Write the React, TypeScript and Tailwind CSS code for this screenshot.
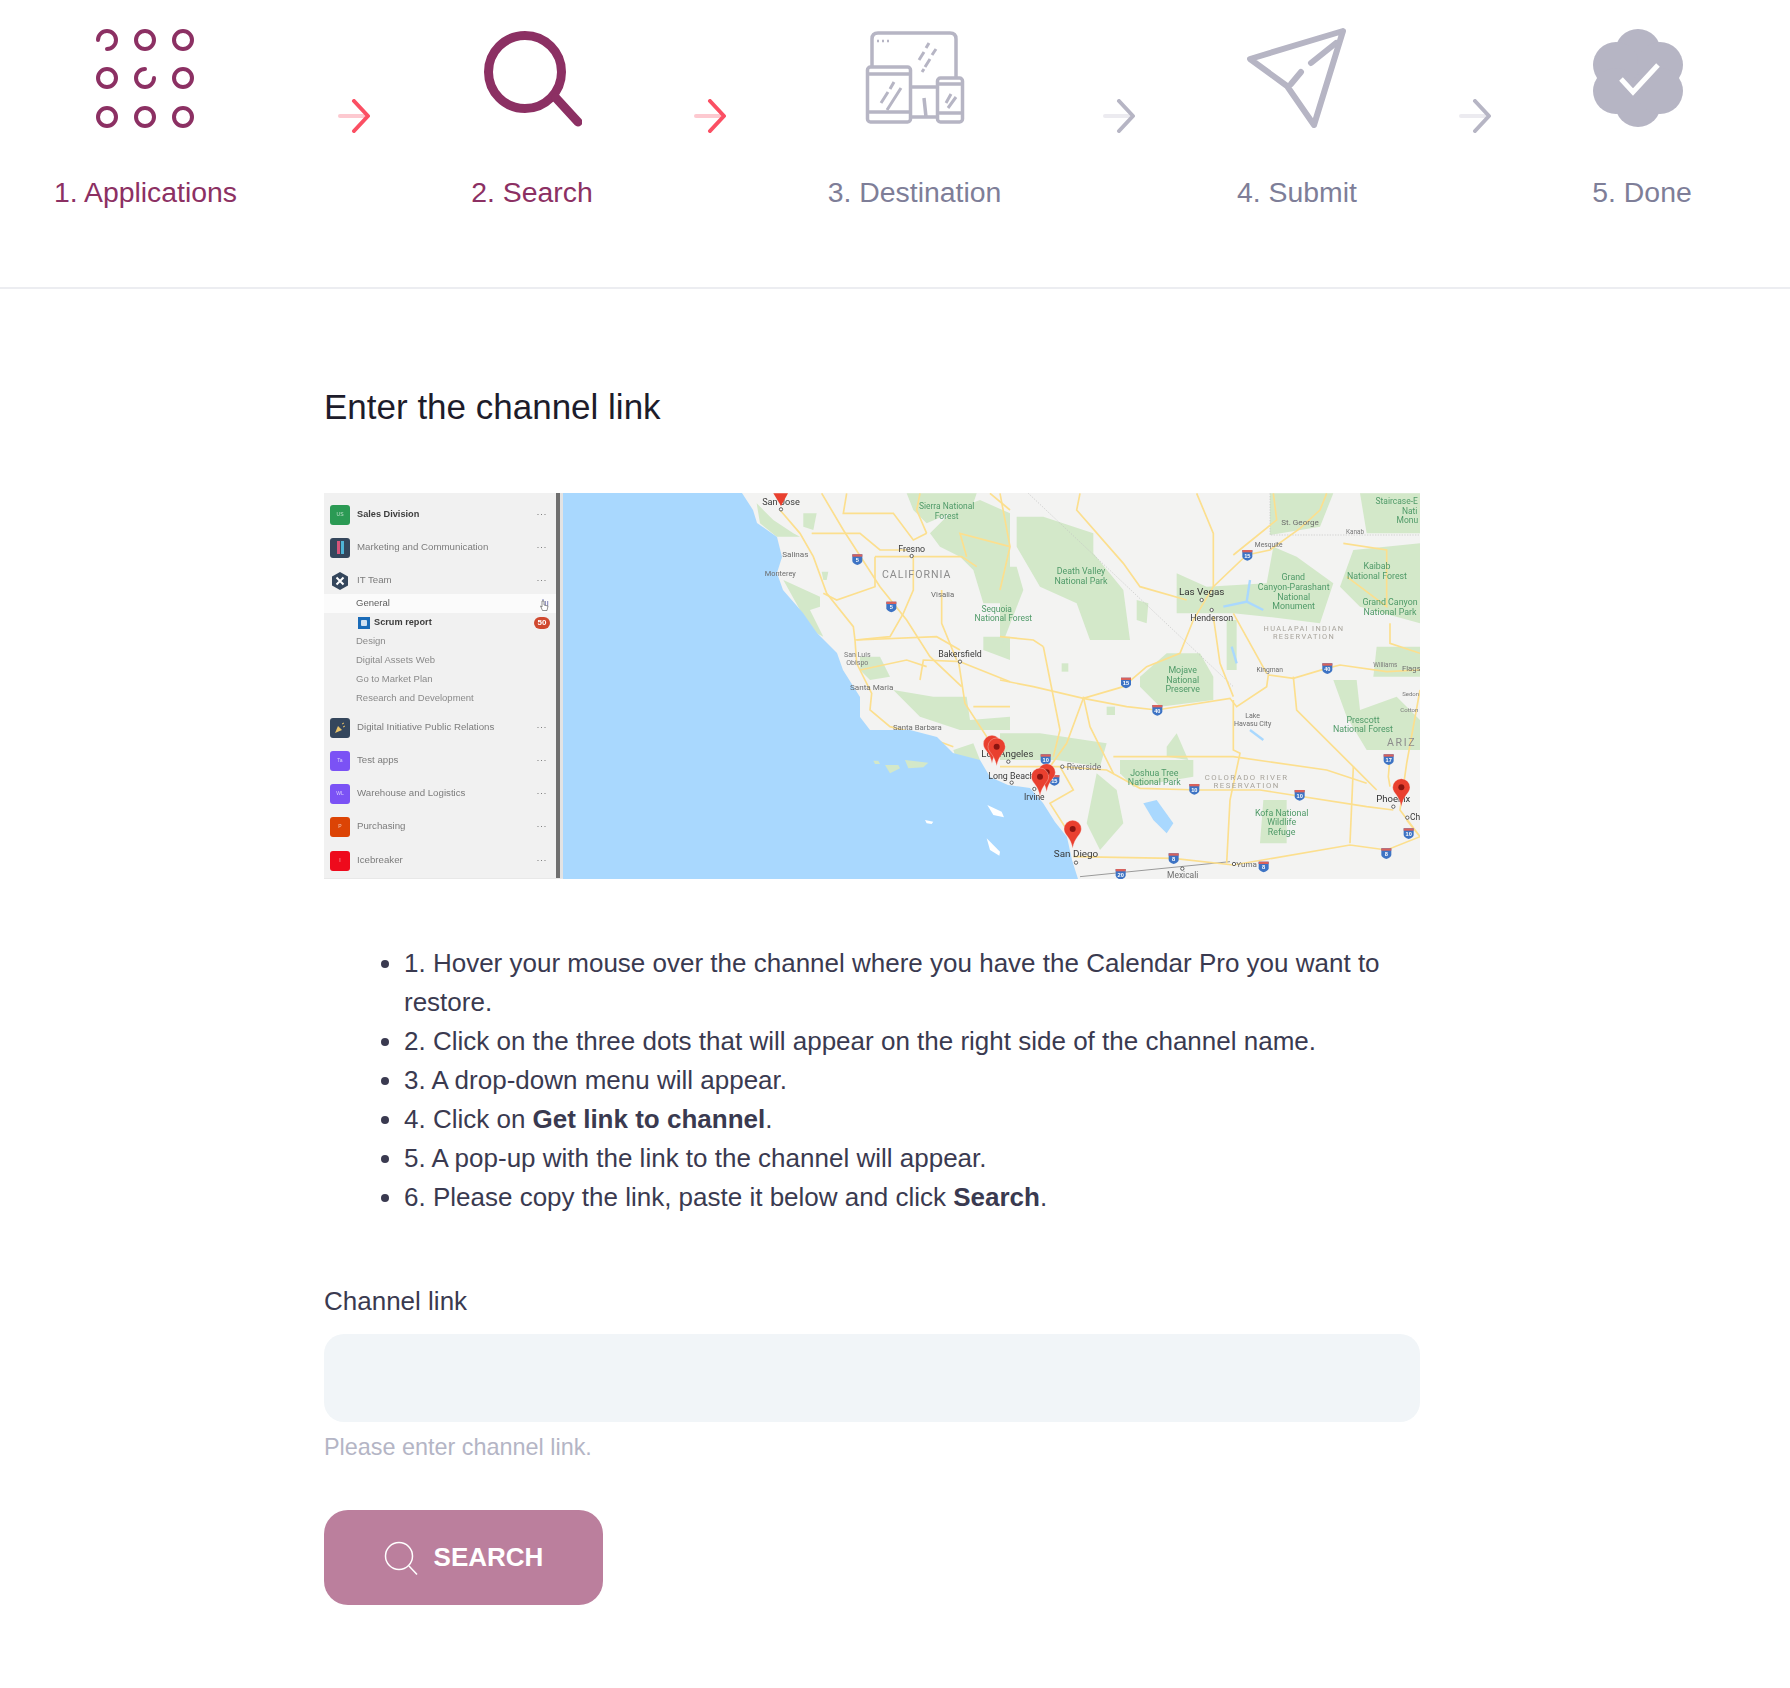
import React from "react";

const FONT = "font-['Liberation_Sans',Arial,sans-serif]";

function Apps() {
  const xs = [107, 145, 183];
  const ys = [40, 78, 117];
  return (
    <svg width="100" height="100" viewBox="96 28 100 100" fill="none" stroke="#8c3063" strokeWidth="4" strokeLinecap="round">
      {ys.map((y, r) =>
        xs.map((x, c) => {
          if (r === 0 && c === 0) return <path key="a" d="M98 40 A9 9 0 1 1 107 49" />;
          if (r === 1 && c === 1) return <path key="b" d="M145 69 A9 9 0 1 0 154 78" />;
          return <circle key={`${r}${c}`} cx={x} cy={y} r="9" />;
        })
      )}
    </svg>
  );
}

function SearchBig() {
  return (
    <svg width="100" height="100" viewBox="482 28 100 100" fill="none" stroke="#8c3063" strokeWidth="9" strokeLinecap="round">
      <circle cx="525" cy="72" r="36.5" />
      <path d="M556 98 L578 122" />
    </svg>
  );
}

function Devices() {
  return (
    <svg width="100" height="100" viewBox="866 28 100 100" fill="none" stroke="#b6b5c4" strokeWidth="3.5">
      <path d="M873 66 V39 Q873 33 879 33 H951 Q957 33 957 39 V77" />
      <path d="M878 41 h2 M883 41 h2 M888 41 h2" strokeWidth="2.5" />
      <path d="M930 43 l-3 5 M925 52 l-5 8 M937 49 l-4 6 M931 59 l-5 8 M925 69 l-2 3" strokeWidth="3" />
      <rect x="868.5" y="67" width="43" height="55" rx="3" />
      <path d="M868 74 H912 M868 112 H912" />
      <path d="M895 82 l-4 7 M889 92 l-7 11 M902 88 l-14 22" strokeWidth="3" />
      <rect x="938.5" y="78" width="25" height="44" rx="3" />
      <path d="M938 84 H964 M938 113 H964" />
      <path d="M952 94 l-5 9 M957 97 l-8 11" strokeWidth="3" />
      <path d="M912 87 H938 M925 98 L927 117 M912 117 H938" />
    </svg>
  );
}

function Plane() {
  return (
    <svg width="100" height="100" viewBox="1248 28 100 100" fill="none" stroke="#b6b5c4" strokeWidth="6" strokeLinecap="round" strokeLinejoin="round">
      <path d="M1344 31 L1251 59 L1288 86 L1315 125 Z" />
      <path d="M1337 43 L1312 63 M1302 72 L1292 84" />
    </svg>
  );
}

function Done() {
  return (
    <svg width="100" height="100" viewBox="1591 28 100 100">
      <g fill="#b6b5c4">
        <circle cx="1637" cy="78" r="36" />
        <circle cx="1637" cy="52" r="23" />
        <circle cx="1637" cy="104" r="23" />
        <circle cx="1615" cy="65" r="23" />
        <circle cx="1659" cy="65" r="23" />
        <circle cx="1615" cy="91" r="23" />
        <circle cx="1659" cy="91" r="23" />
      </g>
      <path d="M1620 79 L1632 92 L1657 65" fill="none" stroke="#fff" strokeWidth="5" />
    </svg>
  );
}

function Arrow({ on }: { on: boolean }) {
  return (
    <svg width="32" height="34" viewBox="0 0 32 34" fill="none" strokeWidth="4" strokeLinecap="round" strokeLinejoin="round" className="shrink-0 mt-[99px]">
      <path d="M2 17 H26" stroke={on ? "#fdc9d0" : "#ecebf0"} />
      <path d="M16 2 L30 17 L16 32" stroke={on ? "#fb4f63" : "#b6b5c4"} />
    </svg>
  );
}

function Step({ icon, label, on, w }: { icon: React.ReactNode; label: string; on: boolean; w: string }) {
  return (
    <div className={`flex flex-col items-center shrink-0 ${w}`}>
      <div className="h-[100px] mt-[28px] flex items-center justify-center">{icon}</div>
      <div className={`mt-[46px] text-[28.4px] leading-[36px] whitespace-nowrap ${on ? "text-[#8c3063]" : "text-[#7e7e98]"}`}>{label}</div>
    </div>
  );
}

const greens4 = [
  "590,40 640,90 700,130 720,140 650,140 600,100",
  "1110,130 1180,60 1260,30 1350,70 1350,340 1270,340 1240,240 1200,200 1140,170",
  "670,270 780,320 780,350 750,360 790,440 770,430 720,360",
  "900,500 960,500 990,560 930,570 900,540",
  "1000,600 1120,620 1220,620 1230,690 1350,680 1350,720 1200,720 1080,680",
  "730,70 770,70 760,120 730,110",
  "1270,440 1350,440 1350,510 1270,480",
  "1040,10 1250,10 1240,40 1100,100 1060,60",
  "785,245 805,245 800,270 790,270",
  "1180,780 1240,760 1260,810 1190,810",
];
const greens5 = [
  "50,80 130,80 280,130 280,190 370,300 390,450 270,450 230,340 120,290 50,170",
  "0,230 50,230 70,300 0,480",
  "810,10 1000,10 960,110 810,135",
  "1080,10 1260,10 1260,130 1100,130",
  "530,250 620,290 800,280 820,170 890,200 1000,280 960,400 800,380 700,370 530,370",
  "1060,180 1260,160 1260,400 1080,350 1020,290",
  "420,560 500,490 600,490 640,560 640,630 480,650 420,590",
  "410,330 445,340 440,400 410,390",
  "0,730 120,730 320,760 300,830 170,810 0,810",
  "500,770 530,730 565,810 500,800",
  "1000,570 1070,570 1080,660 1190,620 1260,690 1260,780 1180,780 1100,780 1040,680",
  "360,810 580,810 580,860 400,890 360,850",
  "290,850 350,900 370,1000 300,1080 260,1000",
  "790,930 860,930 860,1060 780,1060",
  "1130,470 1260,470 1260,560 1120,560",
  "680,390 710,390 710,540 680,540",
  "320,650 345,650 345,675 320,675",
  "185,520 205,520 205,545 185,545",
];
const roads4 = [
  "785,10 850,120 960,290 1040,390 1110,500 1205,590",
  "660,60 720,130 760,200 800,310 880,410 885,450 890,520 935,610 930,660 990,710 1070,730 1180,770",
  "885,450 990,440 1030,370 1060,300 1060,200",
  "945,200 1205,200 1250,230",
  "945,200 945,290 830,330 790,310",
  "1205,515 1090,510 1080,570",
  "1195,510 1215,640 1280,740 1290,770",
  "1200,515 1350,575",
  "890,450 1130,440 1200,480",
  "1145,300 1145,400 1190,510",
  "1240,650 1350,650",
  "860,10 850,70 1000,70 1060,150 1100,130",
  "755,130 900,130 960,180 1040,180",
  "900,540 1040,510 1100,530",
  "1100,130 1070,60 1080,10",
  "1290,10 1350,60",
  "1220,200 1200,130 1350,170",
];
const roads5 = [
  "0,570 100,590 250,625 370,590 440,530 540,490 580,390 640,290 740,195 810,180 900,115 960,60 980,10",
  "250,625 380,650 470,660 690,625 710,650 800,590 805,555 880,565 980,535 1020,525 1160,545 1260,540",
  "0,830 180,830 320,840 420,895 600,900 780,900 1100,950 1180,960",
  "1170,800 1165,860 1170,890",
  "220,1100 520,1105 700,1125 1050,1065 1160,1080 1260,1040",
  "250,625 200,760 150,830",
  "130,470 180,720 160,800",
  "880,560 890,660 1060,830 1130,900",
  "700,630 700,780 720,790 690,930 680,1120",
  "0,440 100,450 130,470",
  "240,10 230,60 370,220 420,290 560,330",
  "640,380 660,520 700,620",
  "700,370 800,550",
  "590,10 640,130 640,290",
  "1170,400 1170,460 1260,490",
  "1220,990 1260,1040 1200,960 1220,820 1260,600",
  "180,830 220,900 150,940 220,1050",
  "250,620 270,710 340,850",
  "340,800 700,800 980,840 1100,880",
  "0,1000 90,1000",
  "820,10 830,90 700,195",
  "1060,830 1050,1060",
  "0,10 30,170 0,300",
  "1030,160 1160,180 1160,350 1040,260",
];

function Shield({ x, y, n }: { x: number; y: number; n: string }) {
  return (
    <g>
      <path d={`M${x - 15} ${y - 15} H${x + 15} V${y + 5} Q${x + 14} ${y + 13} ${x} ${y + 17} Q${x - 14} ${y + 13} ${x - 15} ${y + 5} Z`} fill="#3d73c4" />
      <rect x={x - 15} y={y - 15} width="30" height="7" fill="#d9615b" />
      <text x={x} y={y + 8} fontSize="17" fill="#fff" textAnchor="middle" fontWeight="700">{n}</text>
    </g>
  );
}

function Pin({ x, y }: { x: number; y: number }) {
  return (
    <g>
      <path d={`M${x} ${y} C${x - 6} ${y - 35} ${x - 26} ${y - 40} ${x - 26} ${y - 58} A26 26 0 1 1 ${x + 26} ${y - 58} C${x + 26} ${y - 40} ${x + 6} ${y - 35} ${x} ${y} Z`} fill="#e9402f" stroke="#fbeeea" strokeWidth="1" />
      <circle cx={x} cy={y - 58} r="9" fill="#8a1410" />
    </g>
  );
}

type L = [string, number, number, string?, number?, number?];
const GREEN = "#4f9a68";
const GR = "#6d6d6d";
const DK = "#3a3a3a";
const labels4: L[] = [
  ["San Jose", 663, 44, DK, 26],
  ["Sierra National", 1160, 58, GREEN, 24],
  ["Forest", 1160, 87, GREEN, 24],
  ["Fresno", 1055, 187, DK, 25],
  ["Salinas", 706, 202, GR, 23],
  ["Monterey", 661, 257, GR, 21],
  ["CALIFORNIA", 1070, 265, "#8c8c8c", 30, 3],
  ["Visalia", 1148, 322, GR, 22],
  ["Sequoia", 1310, 365, GREEN, 24],
  ["National Forest", 1330, 393, GREEN, 24],
  ["Bakersfield", 1200, 501, DK, 25],
  ["San Luis", 892, 502, "#7a7a7a", 20],
  ["Obispo", 892, 526, "#7a7a7a", 20],
  ["Santa Maria", 935, 599, GR, 23],
  ["Santa Barbara", 1072, 720, GR, 22],
];
const labels5: L[] = [
  ["Staircase-E", 1190, 42, GREEN, 24],
  ["Nati", 1229, 71, GREEN, 24],
  ["Monu", 1222, 100, GREEN, 24],
  ["St. George", 900, 104, GR, 23],
  ["Kanab", 1065, 132, "#7a7a7a", 18],
  ["Mesquite", 806, 172, GR, 19],
  ["Kaibab", 1131, 236, GREEN, 25],
  ["National Forest", 1131, 266, GREEN, 25],
  ["Death Valley", 243, 253, GREEN, 25],
  ["National Park", 243, 281, GREEN, 25],
  ["Grand", 880, 271, GREEN, 25],
  ["Canyon-Parashant", 881, 300, GREEN, 25],
  ["National", 881, 329, GREEN, 25],
  ["Monument", 881, 357, GREEN, 25],
  ["Las Vegas", 605, 316, "#333", 28],
  ["Grand Canyon", 1170, 345, GREEN, 25],
  ["National Park", 1170, 374, GREEN, 25],
  ["Henderson", 635, 392, DK, 25],
  ["HUALAPAI INDIAN", 912, 423, "#a8a49c", 21, 4],
  ["RESERVATION", 912, 447, "#a8a49c", 21, 4],
  ["Mojave", 548, 550, GREEN, 25],
  ["National", 548, 579, GREEN, 25],
  ["Preserve", 548, 607, GREEN, 25],
  ["Kingman", 809, 546, GR, 19],
  ["Williams", 1156, 532, "#7a7a7a", 18],
  ["Flags", 1234, 543, GR, 22],
  ["Sedon", 1232, 619, "#7a7a7a", 17],
  ["Cotton", 1228, 665, "#7a7a7a", 17],
  ["Lake", 758, 684, GR, 20],
  ["Havasu City", 758, 707, GR, 20],
  ["Prescott", 1089, 698, GREEN, 25],
  ["National Forest", 1089, 726, GREEN, 25],
  ["ARIZ", 1205, 769, "#8c8c8c", 30, 5],
  ["Los Angeles", 22, 800, DK, 27],
  ["Riverside", 252, 840, GR, 24],
  ["Joshua Tree", 463, 857, GREEN, 25],
  ["National Park", 463, 885, GREEN, 25],
  ["COLORADO RIVER", 740, 870, "#a8a49c", 22, 4.5],
  ["RESERVATION", 740, 894, "#a8a49c", 22, 4.5],
  ["Long Beach", 34, 866, DK, 25],
  ["Irvine", 103, 929, DK, 24],
  ["Phoenix", 1180, 936, "#333", 27],
  ["Ch", 1245, 991, DK, 24],
  ["Kofa National", 845, 977, GREEN, 25],
  ["Wildlife", 845, 1006, GREEN, 25],
  ["Refuge", 845, 1035, GREEN, 25],
  ["San Diego", 228, 1102, DK, 28],
  ["Yuma", 740, 1130, GR, 23],
  ["Mexicali", 548, 1163, GR, 24],
];

function Labels({ items }: { items: L[] }) {
  return (
    <>
      {items.map(([t, x, y, c, s, ls]) => (
        <text key={t + x} x={x} y={y} fill={c} fontSize={(s || 24) * 1.06} textAnchor="middle" letterSpacing={ls || 0} fontFamily="Roboto, Liberation Sans, Arial, sans-serif">{t}</text>
      ))}
    </>
  );
}

function MapPic() {
  return (
    <svg width="857" height="386" viewBox="563 493 857 386" className="block blur-[0.5px]" preserveAspectRatio="none">
      <rect x="563" y="493" width="857" height="386" fill="#f3f3f2" />
      <g transform="translate(560 490) scale(0.33333)">
        {greens4.map((p) => <polygon key={p} points={p} fill="#d3e8c9" />)}
        {roads4.map((p) => <polyline key={p} points={p} fill="none" stroke="#fcdf8e" strokeWidth="5" />)}
      </g>
      <g transform="translate(1000 490) scale(0.33333)">
        {greens5.map((p) => <polygon key={p} points={p} fill="#d3e8c9" />)}
        <polygon points="430,940 470,930 520,1000 500,1030 460,990" fill="#a9d8fe" />
        <path d="M670 350 L740 335 L750 270 M740 335 L790 360 M695 470 L710 520 M750 720 L790 750" fill="none" stroke="#a9d8fe" strokeWidth="7" />
        <path d="M85 10 L700 590 M810 10 V135 H1260" fill="none" stroke="#c2c2c2" strokeWidth="2" strokeDasharray="4 4" />
        <path d="M240 1160 L690 1115" fill="none" stroke="#9a9a9a" strokeWidth="3" />
        {roads5.map((p) => <polyline key={p} points={p} fill="none" stroke="#fcdf8e" strokeWidth="5" />)}
      </g>
      <polygon
        points="563,493 742,493 753,510 757,523 777,537 782,557 777,573 783,590 803,613 817,633 837,653 843,670 860,697 860,717 870,730 910,730 937,737 953,753 980,760 990,777 1008,785 1030,788 1043,803 1055,822 1067,837 1072,860 1078,879 563,879"
        fill="#a9d8fe"
      />
      <g transform="translate(560 490) scale(0.33333)">
        <polygon points="940,812 955,812 960,822 945,822" fill="#d3e8c9" />
        <polygon points="975,825 1015,825 1020,835 990,850" fill="#d3e8c9" />
        <polygon points="1035,810 1105,818 1090,832 1045,835" fill="#d3e8c9" />
        <polygon points="1282,945 1325,965 1332,982 1300,975" fill="#fff" />
        <polygon points="1095,990 1120,995 1115,1002 1100,1000" fill="#fff" />
        <polygon points="1280,1045 1320,1085 1318,1097 1290,1080" fill="#fff" />
        <Shield x={892} y={208} n="5" />
        <Shield x={994} y={350} n="5" />
        <Labels items={labels4} />
        <circle cx="663" cy="58" r="5" fill="#fff" stroke="#444" strokeWidth="2.5" />
        <circle cx="1055" cy="198" r="5" fill="#fff" stroke="#444" strokeWidth="2.5" />
        <circle cx="1200" cy="515" r="5" fill="#fff" stroke="#444" strokeWidth="2.5" />
        <path d="M640 10 H684 L663 48 Z" fill="#e9402f" />
      </g>
      <g transform="translate(1000 490) scale(0.33333)">
        {[[742, 195, "15"], [378, 578, "15"], [472, 660, "40"], [982, 535, "40"], [137, 808, "10"], [163, 870, "15"], [583, 897, "10"], [899, 915, "10"], [1166, 808, "17"], [1226, 1030, "10"], [1159, 1090, "8"], [521, 1105, "8"], [791, 1130, "8"], [362, 1152, "20"]].map(([x, y, n]) => (
          <Shield key={`${x}${y}`} x={x as number} y={y as number} n={n as string} />
        ))}
        <Labels items={labels5} />
        {[[605, 330], [635, 360], [25, 815], [187, 830], [35, 878], [103, 897], [228, 1118], [1180, 950], [1222, 983], [547, 1136], [702, 1122]].map(([x, y]) => (
          <circle key={`${x}${y}`} cx={x} cy={y} r="5" fill="#fff" stroke="#444" strokeWidth="2.5" />
        ))}
        <Pin x={140} y={905} />
        <Pin x={120} y={918} />
        <Pin x={218} y={1075} />
        <Pin x={1204} y={950} />
      </g>
      <g transform="translate(560 490) scale(0.33333)">
        <Pin x={1296} y={820} />
        <Pin x={1310} y={828} />
      </g>
    </svg>
  );
}

function TeamIcon({ bg, t }: { bg: string; t?: string }) {
  return (
    <div className={`w-[20px] h-[20px] rounded-[3px] flex items-center justify-center text-[5px] text-white/70 ${bg}`}>{t}</div>
  );
}

function Team({ icon, name, bold }: { icon: React.ReactNode; name: string; bold?: boolean }) {
  return (
    <div className="h-[33px] flex items-center pl-[6px] pr-[9px]">
      {icon}
      <div className={`ml-[7px] flex-1 whitespace-nowrap ${bold ? "text-[9.2px] font-bold text-[#3d3d3d]" : "text-[9.7px] text-[#7c7c7c]"}`}>{name}</div>
      <div className="text-[#6f6f6f] text-[9px] leading-none tracking-[0.5px]">···</div>
    </div>
  );
}

function Channel({ name, children, on }: { name: string; children?: React.ReactNode; on?: boolean }) {
  return (
    <div className={`h-[19px] flex items-center pl-[32px] pr-[7px] text-[9.5px] ${on ? "bg-[#fbfbfb] text-[#5e5e5e]" : "text-[#8a8a8a]"}`}>
      <div className="flex-1 whitespace-nowrap">{name}</div>
      {children}
    </div>
  );
}

function Sidebar() {
  return (
    <div className="w-[232px] shrink-0 h-full bg-[#f1f1f1] pt-[5px] blur-[0.4px] overflow-hidden">
      <Team name="Sales Division" bold icon={<TeamIcon bg="bg-[#2b9a54]" t="US" />} />
      <Team
        name="Marketing and Communication"
        icon={
          <div className="w-[20px] h-[20px] rounded-[3px] bg-[#34465c] flex items-center justify-center gap-[1px]">
            <div className="w-[3px] h-[13px] bg-[#d6547a]" />
            <div className="w-[3px] h-[13px] bg-[#4fb3d6]" />
          </div>
        }
      />
      <Team
        name="IT Team"
        icon={
          <svg width="20" height="20" viewBox="0 0 20 20">
            <polygon points="10,1 18,5.5 18,14.5 10,19 2,14.5 2,5.5" fill="#34465c" />
            <path d="M6.5 6.5 L13.5 13.5 M13.5 6.5 L6.5 13.5" stroke="#fff" strokeWidth="2" />
          </svg>
        }
      />
      <div className="-mt-[3px]">
        <Channel name="General" on>
          <div className="relative text-[#6264a7] text-[9px] leading-none">
            lıı
            <svg width="10" height="12" viewBox="0 0 10 12" className="absolute left-[-3px] top-[1px]">
              <path d="M3 1 V7 L1.5 6 L3.5 10.5 H8 L9 6 L5 5 V1 Z" fill="#fff" stroke="#666" strokeWidth="0.7" />
            </svg>
          </div>
        </Channel>
        <div className="h-[19px] flex items-center pl-[34px] pr-[6px] text-[9.2px] font-bold text-[#3d3d3d]">
          <div className="w-[12px] h-[12px] bg-[#1a6bb8] mr-[4px] flex items-center justify-center">
            <div className="w-[6px] h-[6px] bg-white/80 rounded-[1px]" />
          </div>
          <div className="flex-1 whitespace-nowrap">Scrum report</div>
          <div className="w-[16px] h-[12px] rounded-full bg-[#d0492f] text-white text-[8px] leading-[12px] text-center">50</div>
        </div>
        <Channel name="Design" />
        <Channel name="Digital Assets Web" />
        <Channel name="Go to Market Plan" />
        <Channel name="Research and Development" />
      </div>
      <div className="mt-[3px]">
        <Team
          name="Digital Initiative Public Relations"
          icon={
            <div className="w-[20px] h-[20px] rounded-[3px] bg-[#34465c] flex items-center justify-center">
              <svg width="12" height="12" viewBox="0 0 12 12"><path d="M1 11 L4 4 L8 8 Z" fill="#e8c36a" /><path d="M8 2 L10 1 M9 5 L11 4" stroke="#e8c36a" /></svg>
            </div>
          }
        />
        <Team name="Test apps" icon={<TeamIcon bg="bg-[#7b52f5]" t="Ta" />} />
        <Team name="Warehouse and Logistics" icon={<TeamIcon bg="bg-[#7b52f5]" t="WL" />} />
        <Team name="Purchasing" icon={<TeamIcon bg="bg-[#dc4405]" t="P" />} />
        <div className="mt-[1px]">
          <Team name="Icebreaker" icon={<TeamIcon bg="bg-[#ee0a1c]" t="I" />} />
        </div>
      </div>
    </div>
  );
}

export default function App() {
  return (
    <div className={`${FONT} bg-white h-[1688px] w-[1790px] overflow-hidden`}>
      <div className="h-[289px] border-b-2 border-[#ecedf1] flex items-start pl-[54px] gap-[101px]">
        <Step icon={<Apps />} label="1. Applications" on w="w-[183px]" />
        <Arrow on />
        <Step icon={<SearchBig />} label="2. Search" on w="w-[122px]" />
        <Arrow on />
        <Step icon={<Devices />} label="3. Destination" on={false} w="w-[175px]" />
        <Arrow on={false} />
        <Step icon={<Plane />} label="4. Submit" on={false} w="w-[122px]" />
        <Arrow on={false} />
        <Step icon={<Done />} label="5. Done" on={false} w="w-[100px]" />
      </div>

      <div className="ml-[324px] w-[1096px]">
        <h1 className="mt-[93px] text-[35px] leading-[50px] text-[#1d1c2b]">Enter the channel link</h1>

        <div className="mt-[61px] h-[386px] flex bg-white border-b border-[#e8e8e8]">
          <Sidebar />
          <div className="w-[4px] h-full bg-[#6f6f6f] shrink-0" />
          <div className="w-[3px] h-full bg-[#e3e3e3] shrink-0" />
          <MapPic />
        </div>

        <ul className="mt-[65px] list-disc pl-[80px] text-[26px] leading-[39px] text-[#3a3a50]">
          <li>1. Hover your mouse over the channel where you have the Calendar Pro you want to restore.</li>
          <li>2. Click on the three dots that will appear on the right side of the channel name.</li>
          <li>3. A drop-down menu will appear.</li>
          <li>4. Click on <b>Get link to channel</b>.</li>
          <li>5. A pop-up with the link to the channel will appear.</li>
          <li>6. Please copy the link, paste it below and click <b>Search</b>.</li>
        </ul>

        <div className="mt-[65px] text-[26px] leading-[39px] text-[#3a3a50]">Channel link</div>
        <div className="mt-[13px] h-[88px] rounded-[20px] bg-[#f1f5f8]" />
        <div className="mt-[7px] text-[23.4px] leading-[36px] text-[#b4b5c5]">Please enter channel link.</div>

        <div className="mt-[45px] w-[279px] h-[95px] rounded-[24px] bg-[#bb7f9d] flex items-center justify-center gap-[16px]">
          <svg width="34" height="34" viewBox="0 0 34 34" fill="none" stroke="#fff" strokeWidth="1.5">
            <circle cx="15" cy="15" r="13.5" />
            <path d="M25 25 L33 33.5" />
          </svg>
          <span className="text-[26px] font-bold text-white">SEARCH</span>
        </div>
      </div>
    </div>
  );
}
